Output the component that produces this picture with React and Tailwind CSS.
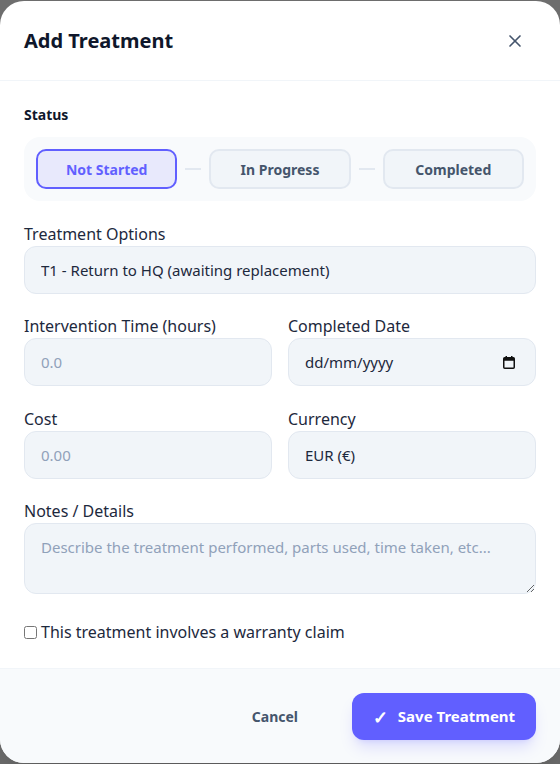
import { useState } from "react";
import { X } from "lucide-react";

const STATUSES = ["Not Started", "In Progress", "Completed"];

const fieldBase =
  "w-full h-12 rounded-xl border border-slate-200 bg-slate-100 px-4 text-[15px] text-slate-800 outline-none";

function Label({ children }) {
  return <label className="block text-base leading-[22px] mb-px text-slate-800">{children}</label>;
}

function CalendarIcon() {
  return (
    <svg width="12" height="13" viewBox="0 0 12 13" className="shrink-0">
      <rect x="0.75" y="1.75" width="10.5" height="10.5" rx="1" fill="none" stroke="#111" strokeWidth="1.5" />
      <rect x="0.75" y="1.75" width="10.5" height="3" fill="#111" />
      <rect x="2.5" y="0" width="1.5" height="2.5" fill="#111" />
      <rect x="8" y="0" width="1.5" height="2.5" fill="#111" />
    </svg>
  );
}

export default function App() {
  const [status, setStatus] = useState("Not Started");
  const [warranty, setWarranty] = useState(false);

  return (
    <div className="min-h-screen bg-[#6f6f6f] py-px" style={{ fontFamily: '"Noto Sans", "Open Sans", sans-serif' }}>
      <div className="h-[762px] rounded-3xl bg-white overflow-hidden flex flex-col shadow-2xl">
        <header className="h-20 flex-shrink-0 flex items-center justify-between px-6 border-b border-slate-100">
          <h2 className="text-xl font-bold text-slate-900">Add Treatment</h2>
          <button className="p-2 mr-[3px] rounded-lg text-slate-600 hover:bg-slate-100">
            <X size={20} />
          </button>
        </header>

        <div className="flex-1 px-6 pt-6">
          <p className="text-sm leading-5 font-bold text-slate-900 mb-3">Status</p>
          <div className="flex items-center gap-2 rounded-2xl bg-slate-50 p-3">
            {STATUSES.map((s, i) => {
              const active = status === s;
              return [
                i > 0 && <div key={`sep-${s}`} className="h-[2px] w-4 bg-slate-200 flex-shrink-0" />,
                <button
                  key={s}
                  onClick={() => setStatus(s)}
                  className={`h-10 flex-1 rounded-[10px] border-2 pt-px text-sm font-bold ${
                    active
                      ? "border-indigo-500 bg-[#e8e9fc] text-indigo-500"
                      : "border-slate-200 bg-slate-100 text-slate-600"
                  }`}
                >
                  {s}
                </button>,
              ];
            })}
          </div>

          <div className="mt-[22px]">
            <Label>Treatment Options</Label>
            <select className={`${fieldBase} appearance-none`} defaultValue="t1">
              <option value="t1">T1 - Return to HQ (awaiting replacement)</option>
            </select>
          </div>

          <div className="mt-[21px] grid grid-cols-2 gap-4">
            <div>
              <Label>Intervention Time (hours)</Label>
              <input className={`${fieldBase} placeholder:text-slate-400`} placeholder="0.0" />
            </div>
            <div>
              <Label>Completed Date</Label>
              <div className={`${fieldBase} flex items-center justify-between pr-5`}>
                <span>dd/mm/yyyy</span>
                <CalendarIcon />
              </div>
            </div>
          </div>

          <div className="mt-[22px] grid grid-cols-2 gap-4">
            <div>
              <Label>Cost</Label>
              <input className={`${fieldBase} placeholder:text-slate-400`} placeholder="0.00" />
            </div>
            <div>
              <Label>Currency</Label>
              <select className={`${fieldBase} appearance-none`} defaultValue="eur">
                <option value="eur">EUR (€)</option>
              </select>
            </div>
          </div>

          <div className="mt-[21px]">
            <Label>Notes / Details</Label>
            <textarea
              className="block w-full h-[71px] rounded-xl border border-slate-200 bg-slate-100 px-4 py-3 text-[15px] text-slate-800 outline-none placeholder:text-slate-400"
              placeholder="Describe the treatment performed, parts used, time taken, etc..."
            />
          </div>

          <label className="mt-[26px] flex items-center gap-1 text-base leading-6 text-slate-800">
            <input
              type="checkbox"
              checked={warranty}
              onChange={(e) => setWarranty(e.target.checked)}
              className="w-[13px] h-[13px] m-0"
            />
            This treatment involves a warranty claim
          </label>
        </div>

        <footer className="flex-shrink-0 flex items-center justify-end gap-[30px] border-t border-slate-100 bg-slate-50 px-6 pt-6 pb-[23px]">
          <button className="px-6 text-sm font-bold text-slate-600">Cancel</button>
          <button className="h-[47px] w-[184px] flex items-center justify-center gap-[10px] rounded-xl bg-indigo-500 text-[15px] font-bold text-white shadow-lg shadow-indigo-500/20">
            <span className="text-lg leading-none">✓</span>
            Save Treatment
          </button>
        </footer>
      </div>
    </div>
  );
}
